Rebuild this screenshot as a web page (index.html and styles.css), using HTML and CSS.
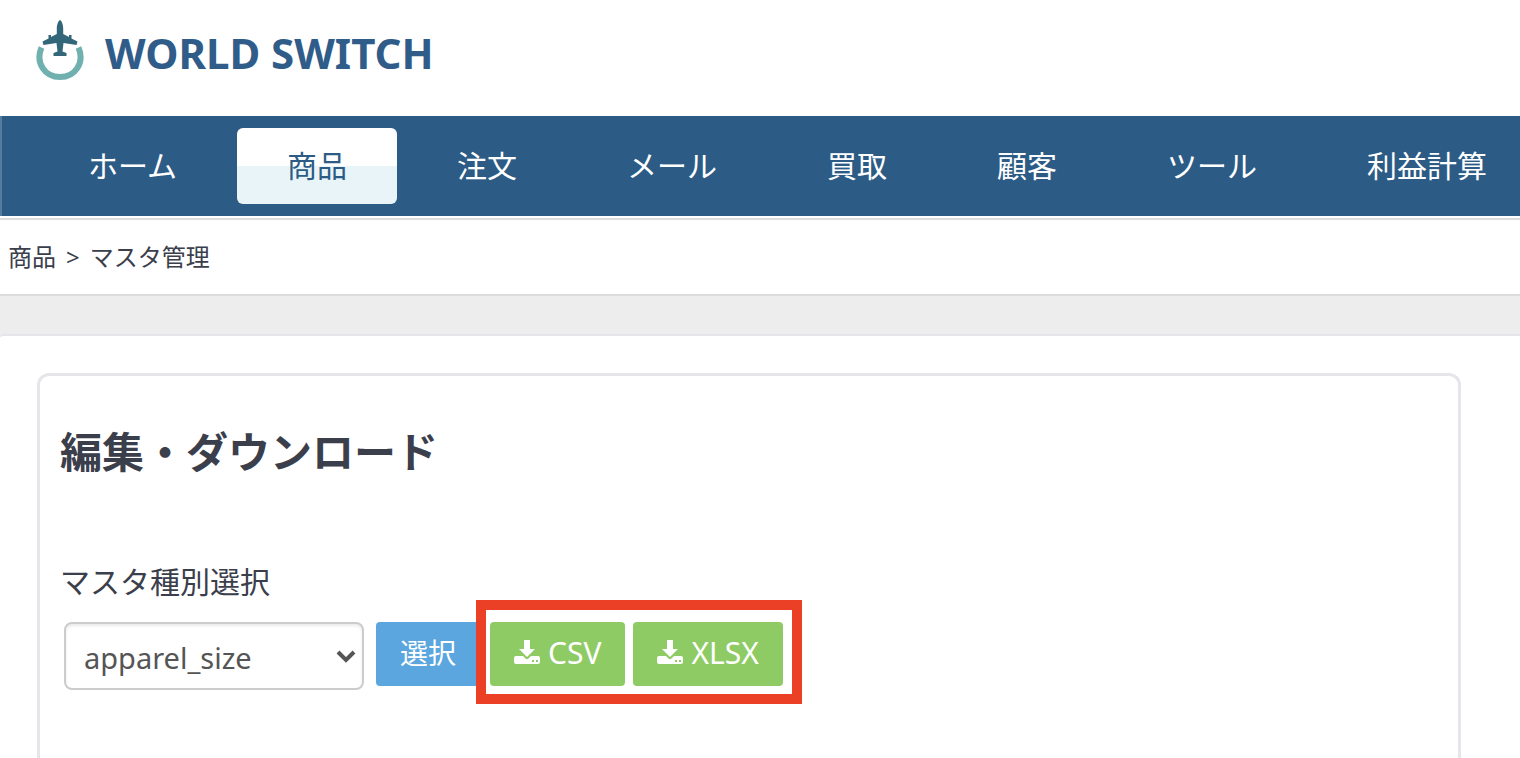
FILE: index.html
```html
<!DOCTYPE html>
<html lang="ja">
  <head>
    <meta charset="UTF-8" />
    <title>マスタ管理 | WORLD SWITCH</title>
    <link rel="stylesheet" href="styles.css">
  </head>
  <body>
    <header class="header">
      <a class="logo" href="#">
        <svg class="logo-icon" width="48" height="62" viewBox="0 0 48 62" aria-hidden="true">
          <path d="M5.500 27.500C-1 43 9 57 24 57C39 57 49 43 42.500 27.500" fill="none" stroke="#70b0ae" stroke-width="6"/>
          <path d="M24 0C26 1 27.200 5 27.200 9V14L33 17V15H35.500V18.500L41.500 21.500L40.500 25L27.500 23L26.500 31.500L30.500 33V36H17.500V33L21.500 31.500L20.500 23L7.500 25L6.500 21.500L12.500 18.500V15H15V17L20.800 14V9C20.800 5 22 1 24 0Z" fill="#34667a"/>
        </svg>
        <span class="logo-text">WORLD SWITCH</span>
      </a>
    </header>
    <nav class="nav">
      <a class="nav-item" href="#">ホーム</a>
      <a class="nav-item active" href="#">商品</a>
      <a class="nav-item" href="#">注文</a>
      <a class="nav-item" href="#">メール</a>
      <a class="nav-item" href="#">買取</a>
      <a class="nav-item" href="#">顧客</a>
      <a class="nav-item" href="#">ツール</a>
      <a class="nav-item" href="#">利益計算</a>
    </nav>
    <div class="breadcrumb">
      <a href="#">商品</a>
      <span>&gt;</span>
      <span>マスタ管理</span>
    </div>
    <main class="content">
      <section class="panel">
        <h1>編集・ダウンロード</h1>
        <form class="master-form">
          <label for="master">マスタ種別選択</label>
          <div class="form-row">
            <div class="select-box">
              <select id="master">
                <option>apparel_size</option>
              </select>
              <svg class="arrow" width="20" height="13" viewBox="0 0 20 13" aria-hidden="true">
                <path d="M2 2L10 10L18 2" fill="none" stroke="#555" stroke-width="4"/>
              </svg>
            </div>
            <button type="button" class="btn btn-blue">選択</button>
            <div class="downloads">
              <button type="button" class="btn btn-green">
                <svg width="26" height="24" viewBox="0 0 26 24" aria-hidden="true">
                  <path d="M10 0H16V9H21L13 17L5 9H10Z" fill="#fff"/>
                  <path d="M2 16H9L11.500 18.500Q13 20 14.500 18.500L17 16H24Q26 16 26 18V22Q26 24 24 24H2Q0 24 0 22V18Q0 16 2 16ZM18 20V22H20V20ZM22 20V22H24V20Z" fill="#fff" fill-rule="evenodd"/>
                </svg>
                CSV
              </button>
              <button type="button" class="btn btn-green">
                <svg width="26" height="24" viewBox="0 0 26 24" aria-hidden="true">
                  <path d="M10 0H16V9H21L13 17L5 9H10Z" fill="#fff"/>
                  <path d="M2 16H9L11.500 18.500Q13 20 14.500 18.500L17 16H24Q26 16 26 18V22Q26 24 24 24H2Q0 24 0 22V18Q0 16 2 16ZM18 20V22H20V20ZM22 20V22H24V20Z" fill="#fff" fill-rule="evenodd"/>
                </svg>
                XLSX
              </button>
            </div>
          </div>
        </form>
      </section>
    </main>
  </body>
</html>
```
FILE: styles.css
```css
* {
  box-sizing: border-box;
}

body {
  display: flex;
  flex-direction: column;
  height: 100vh;
  margin: 0;
  overflow: hidden;
  background-color: #ededed;
  color: #3b3e4b;
  font-family: "Noto Sans", "Noto Sans CJK JP", sans-serif;
}

a {
  color: inherit;
  text-decoration: none;
}

.header {
  flex: none;
  height: 116px;
  padding: 20px 36px;
  background-color: #fff;
}

.logo {
  display: inline-flex;
  align-items: center;
  gap: 21px;
}

.logo-text {
  padding-top: 4px;
  color: #305c89;
  font-size: 42px;
  font-weight: bold;
  line-height: 58px;
}

.nav {
  display: flex;
  flex: none;
  gap: 10px;
  padding: 12px 36px;
  overflow: hidden;
  background-color: #2c5b85;
  border-left: 2px solid #587c9e;
}

.nav-item {
  flex: none;
  padding: 0 50px 4px;
  border-radius: 6px;
  color: #fff;
  font-family: "Noto Sans CJK JP", sans-serif;
  font-size: 30px;
  line-height: 72px;
}

.nav-item.active {
  background: linear-gradient(#fff 50%, #e9f4f8 50%);
  color: #2c5b85;
}

.breadcrumb {
  display: flex;
  flex: none;
  gap: 10px;
  margin-top: 2px;
  padding: 0 8px;
  background-color: #fff;
  border-top: 2px solid #dcdcdc;
  border-bottom: 2px solid #dcdcdc;
  box-shadow: 0 -2px #fff;
  font-size: 24px;
  line-height: 74px;
}

.content {
  flex: 1;
  margin-top: 38px;
  padding: 37px 59px 0 37px;
  background-color: #fff;
  border-top: 2px solid #e5e5ea;
  border-radius: 4px 0 0 0;
}

.panel {
  height: 100%;
  padding: 44px 20px 0;
  border: 3px solid #e5e5ea;
  border-bottom: none;
  border-radius: 12px 12px 0 0;
}

h1 {
  margin: 0;
  font-size: 42px;
  line-height: 64px;
}

.master-form {
  margin-top: 76px;
}

label {
  display: block;
  font-size: 30px;
  line-height: 44px;
}

.form-row {
  display: flex;
  align-items: flex-start;
  margin-top: 18px;
  padding-left: 4px;
}

.select-box {
  position: relative;
  width: 300px;
  margin-right: 12px;
}

select {
  width: 100%;
  height: 68px;
  padding: 2px 18px 0;
  appearance: none;
  background-color: #fff;
  border: 2px solid #ccc;
  border-radius: 8px;
  box-shadow: inset 0 2px 3px #eaeaea;
  color: #555;
  font-family: "Noto Sans", sans-serif;
  font-size: 29px;
}

.arrow {
  position: absolute;
  top: 28px;
  right: 8px;
  pointer-events: none;
}

.btn {
  display: flex;
  align-items: center;
  gap: 8px;
  height: 64px;
  padding: 0 24px 4px;
  border: none;
  border-radius: 4px;
  color: #fff;
  font-family: "Noto Sans", "Noto Sans CJK JP", sans-serif;
}

.btn-blue {
  background-color: #5ba6de;
  font-size: 28px;
}

.btn-green {
  background-color: #8ecb64;
  font-size: 30px;
}

.downloads {
  display: flex;
  position: relative;
  gap: 8px;
  margin-left: 10px;
}

/* red frame around the download buttons */
.downloads::after {
  content: "";
  position: absolute;
  top: -22px;
  right: -19px;
  bottom: -18px;
  left: -14px;
  border: 10px solid #eb4026;
  pointer-events: none;
}
```
